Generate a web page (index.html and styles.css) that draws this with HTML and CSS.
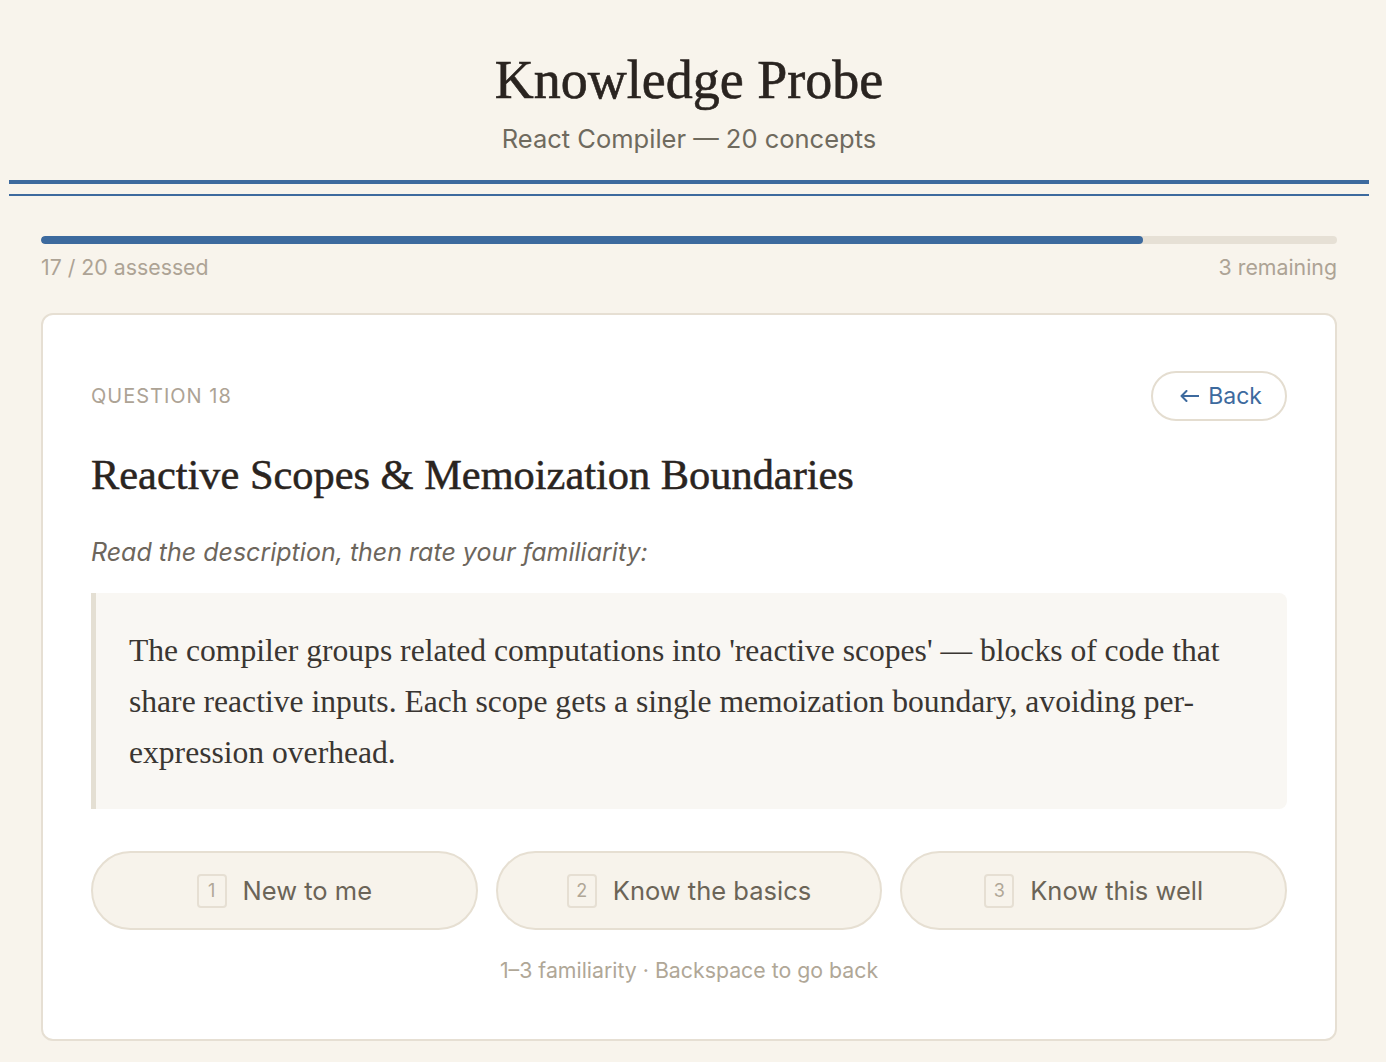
FILE: index.html
```html
<!DOCTYPE html>
<html lang="en">
<head>
<meta charset="utf-8">
<title>Knowledge Probe</title>
<link rel="stylesheet" href="styles.css">
</head>
<body>
<div class="page">
  <header class="masthead">
    <h1 class="title">Knowledge Probe</h1>
    <p class="subtitle">React Compiler — 20 concepts</p>
  </header>
  <div class="rule-thin"></div>

  <main class="main">
    <section class="progress">
      <div class="track"><div class="fill" style="width:85%"></div></div>
      <div class="progress-labels">
        <span>17 / 20 assessed</span>
        <span>3 remaining</span>
      </div>
    </section>

    <section class="card">
      <div class="card-top">
        <span class="eyebrow">QUESTION 18</span>
        <button class="back-btn">
          <svg class="arrow" width="19" height="12" viewBox="0 0 19 12" aria-hidden="true"><path d="M18.5 6H1.5M6.5 1L1.5 6l5 5" fill="none" stroke="#3d6a9e" stroke-width="2" stroke-linecap="round" stroke-linejoin="round"/></svg>
          <span>Back</span>
        </button>
      </div>
      <h2 class="concept">Reactive Scopes &amp; Memoization Boundaries</h2>
      <p class="prompt">Read the description, then rate your familiarity:</p>
      <blockquote class="description">The compiler groups related computations into 'reactive scopes' — blocks of code that share reactive inputs. Each scope gets a single memoization boundary, avoiding per-expression overhead.</blockquote>
      <div class="choices">
        <button class="choice"><span class="key">1</span><span>New to me</span></button>
        <button class="choice"><span class="key">2</span><span>Know the basics</span></button>
        <button class="choice"><span class="key">3</span><span>Know this well</span></button>
      </div>
      <p class="hint">1–3 familiarity · Backspace to go back</p>
    </section>
  </main>
</div>
</body>
</html>
```

FILE: styles.css
```css
html, body {
  margin: 0;
  padding: 0;
  background: #f8f4ec;
}
body {
  font-family: Inter, "DejaVu Sans", sans-serif;
  color: #2a2420;
}
.page {
  width: 1360px;
  margin-left: 9px;
}
.masthead {
  text-align: center;
  padding-top: 48px;
  padding-bottom: 26px;
  border-bottom: 4px solid #3d6a9e;
}
.title {
  margin: 0;
  font-family: "Liberation Serif", serif;
  font-weight: 400;
  font-size: 54px;
  line-height: 64px;
  color: #2a2420;
  -webkit-text-stroke: 0.6px #2a2420;
}
.subtitle {
  margin: 12px 0 0;
  font-size: 25.5px;
  line-height: 30px;
  color: #6f6a5e;
}
.rule-thin {
  height: 2px;
  margin-top: 10px;
  background: #3d6a9e;
}
.main {
  padding: 40px 32px 40px;
}
.progress {
  margin-bottom: 33px;
}
.track {
  height: 8px;
  border-radius: 4px;
  background: #e6e0d5;
  overflow: hidden;
}
.fill {
  height: 100%;
  background: #3d6a9e;
  border-radius: 4px;
}
.progress-labels {
  display: flex;
  justify-content: space-between;
  margin-top: 10px;
  font-size: 21.3px;
  line-height: 26px;
  color: #ada395;
}
.card {
  background: #ffffff;
  border: 2px solid #e6dfd3;
  border-radius: 12px;
  padding: 56px 48px 56px;
}
.card-top {
  display: flex;
  justify-content: space-between;
  align-items: center;
}
.eyebrow {
  font-size: 20px;
  letter-spacing: 1px;
  color: #ada395;
}
.back-btn {
  height: 50px;
  padding: 0 23px 0 27px;
  border: 2px solid #e4ddd0;
  border-radius: 25px;
  background: #ffffff;
  color: #3d6a9e;
  font-family: Inter, "DejaVu Sans", sans-serif;
  font-size: 23px;
  display: flex;
  align-items: center;
  gap: 9px;
}
.arrow {
  display: block;
}
.concept {
  margin: 29px 0 0;
  font-family: "Liberation Serif", serif;
  font-weight: 400;
  font-size: 42.4px;
  line-height: 50px;
  color: #2a2420;
  -webkit-text-stroke: 0.5px #2a2420;
}
.prompt {
  margin: 36px 0 0;
  font-style: italic;
  font-size: 25px;
  line-height: 32px;
  color: #6d665c;
}
.description {
  margin: 25px 0 0;
  padding: 32px 36px 31px 33px;
  background: #f9f7f3;
  border-left: 5px solid #e4dfd3;
  border-radius: 0 8px 8px 0;
  font-family: "Liberation Serif", serif;
  font-size: 31.6px;
  line-height: 51px;
  color: #3a3632;
}
.choices {
  display: grid;
  grid-template-columns: repeat(3, 1fr);
  gap: 18px;
  margin-top: 42px;
}
.choice {
  height: 79px;
  border: 2px solid #e6dfd2;
  border-radius: 40px;
  background: #f7f3eb;
  display: flex;
  align-items: center;
  justify-content: center;
  gap: 16px;
  font-family: Inter, "DejaVu Sans", sans-serif;
  font-size: 25.5px;
  color: #6b6457;
}
.key {
  width: 26px;
  height: 30px;
  border: 2px solid #e6dfd3;
  border-radius: 4px;
  display: flex;
  align-items: center;
  justify-content: center;
  font-size: 18px;
  color: #b0a797;
}
.hint {
  margin: 27px 0 0;
  text-align: center;
  font-size: 21.3px;
  line-height: 26px;
  color: #b0a797;
}
```
